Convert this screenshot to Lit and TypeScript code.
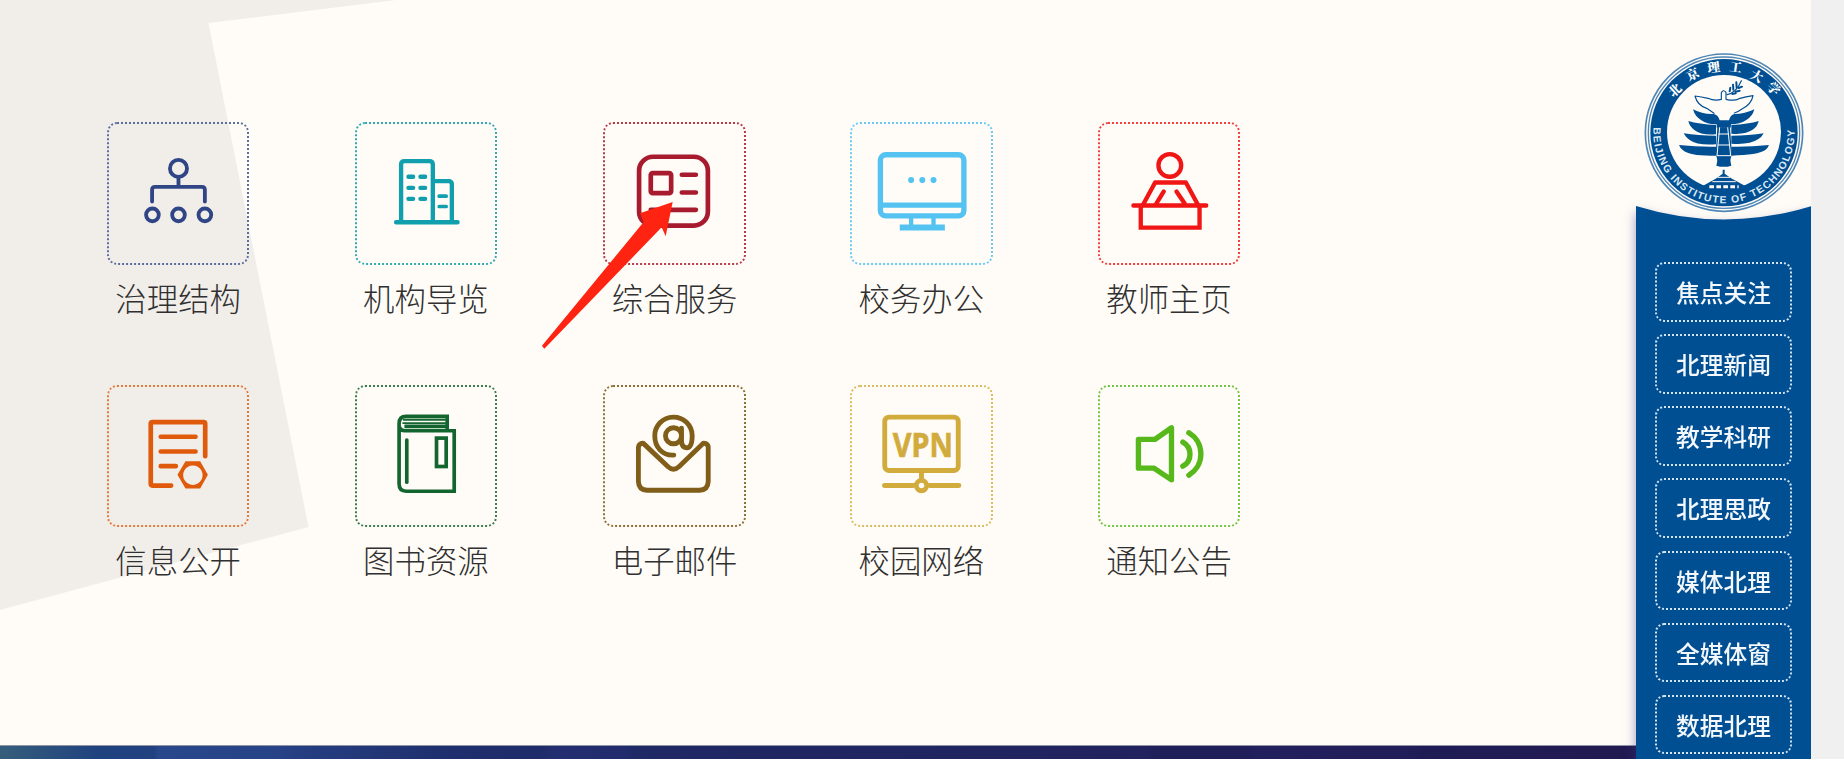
import { LitElement, html, css, svg } from "lit";
import { customElement, property } from "lit/decorators.js";

const CJK = css`"Noto Sans CJK SC", "Noto Sans", sans-serif`;

const icons: Record<string, unknown> = {
  structure: svg`<svg viewBox="57 41 414 414" fill="none" stroke="#2f4585" stroke-width="11.500" stroke-linecap="round">
    <circle cx="265" cy="174" r="25.5"/><path d="M265 200V226M186 273V238q0-9 9-9H335q9 0 9 9V273"/>
    <circle cx="187" cy="313" r="19"/><circle cx="265" cy="313" r="19"/><circle cx="344" cy="313" r="19"/></svg>`,
  building: svg`<svg viewBox="800 41 414 414" fill="none" stroke="#119fae" stroke-width="13" stroke-linecap="round">
    <path d="M917 335H1101M932 335V162q0-10 10-10H1017q10 0 10 10V335M1027 212H1074q10 0 10 10V335"/>
    <path d="M954 199H968M990 199H1004M954 232H968M990 232H1004M954 265H968M990 265H1004"/><path stroke-width="11" d="M1046 257H1067M1046 288H1067"/></svg>`,
  service: svg`<svg viewBox="256 41 414 414" fill="none" stroke="#a81a2e" stroke-width="14" stroke-linecap="round">
    <rect x="358" y="139" width="206" height="206" rx="42"/><rect x="393" y="188" width="61" height="60" rx="6"/>
    <path d="M486 193H528M486 246H528M393 298H528"/></svg>`,
  office: svg`<svg viewBox="996 41 414 414" fill="none" stroke="#55c3f2" stroke-width="16">
    <rect x="1081" y="133" width="250" height="183" rx="16"/><path d="M1081 284H1331"/>
    <path stroke-width="13" d="M1173 320V345M1240 320V345"/><path stroke-width="18" d="M1139 351H1274"/>
    <g fill="#55c3f2" stroke="none"><circle cx="1173" cy="209" r="9"/><circle cx="1206.500" cy="209" r="9"/><circle cx="1240" cy="209" r="9"/></g></svg>`,
  teacher: svg`<svg viewBox="60 41 414 414" fill="none" stroke="#f01616" stroke-width="13" stroke-linecap="round">
    <circle cx="269" cy="165" r="34"/><path stroke-linejoin="round" d="M188 284L225 216H317L354 284"/>
    <path d="M228 280L251 243M314 280L289 243M160 285H378"/><path stroke-linecap="butt" d="M182 288V351H358V288"/></svg>`,
  info: svg`<svg viewBox="57 50 414 414" fill="none" stroke="#e05a0c" stroke-width="14" stroke-linecap="round" stroke-linejoin="round">
    <path d="M345 257V160q0-5-5-5H187q-5 0-5 5V340q0 5 5 5H243M212 199H316M212 243H316M212 287H257"/>
    <path fill="#e05a0c" stroke="none" fill-rule="evenodd" d="M286 272H330L353 313L330 354H286L262 313ZM308 285a29 29 0 1 0 .1 0Z"/></svg>`,
  book: svg`<svg viewBox="800 50 414 414" fill="none" stroke="#13652f" stroke-width="11">
    <path d="M1070 180V138H947q-21 0-21 22V340q0 22 21 22H1091V181H942q-15-2-16-15M942 168H1067"/><path stroke-width="5.500" d="M938 148H1066M936 158H1066"/>
    <path stroke-linecap="round" d="M949 209V335"/><rect x="1038" y="203" width="29" height="85"/></svg>`,
  mail: svg`<svg viewBox="46 50 414 414" fill="none" stroke="#805d18" stroke-width="14.500" stroke-linecap="round" stroke-linejoin="round">
    <path d="M146 333V231Q147 219 160 218L234 288Q251 304 268 288L341 218Q355 219 355 231V333Q354 358 329 359H172Q147 358 146 333Z"/>
    <path d="M252 254C217 256 195 229 195 197A56 56 0 0 1 307 195Q307 231 291 232Q275 231 275 211V173"/><circle cx="251" cy="196" r="24"/></svg>`,
  vpn: svg`<svg viewBox="787 50 414 414" fill="none" stroke="#d2ab3d" stroke-width="14.500" stroke-linecap="round">
    <rect x="885" y="140" width="220" height="160" rx="13"/><path d="M995 303V323M884 345H970M1020 345H1107"/><circle cx="995" cy="345" r="15.500"/>
    <text class="vpn" x="909" y="261" textLength="180" lengthAdjust="spacingAndGlyphs">VPN</text></svg>`,
  notice: svg`<svg viewBox="60 50 414 414" fill="none" stroke="#57b81c" stroke-width="16" stroke-linecap="round" stroke-linejoin="round">
    <path d="M175 207H224L274 172V328L222 293H175Z"/><path d="M308 215A41 41 0 0 1 308 287M326 187A74 74 0 0 1 326 314"/></svg>`,
};

@customElement("service-tile")
class ServiceTile extends LitElement {
  @property() label = "";
  @property() icon = "";
  @property() color = "";
  static styles = css`
    :host { display: flex; flex-direction: column; align-items: center; width: 142.3px; }
    .box { box-sizing: border-box; width: 142.3px; height: 142.3px; border: 2px dotted; border-radius: 10px; }
    .box svg { display: block; width: 100%; height: 100%; }
    .label { margin-top: 9px; height: 47px; font: 300 31.4px/47px ${CJK}; color: #303030; white-space: nowrap; }
    .vpn { font: bold 100px "Noto Sans", "Open Sans", sans-serif; fill: #d2ab3d; stroke: #d2ab3d; stroke-width: 2px; }
  `;
  render() {
    return html`<div class="box" style="border-color:${this.color}">${icons[this.icon]}</div><div class="label">${this.label}</div>`;
  }
}

@customElement("school-emblem")
class SchoolEmblem extends LitElement {
  static styles = css`
    :host { display: block; width: 160px; height: 160px; }
    svg { display: block; }
    .cn { font: 900 38px "Noto Serif CJK SC", "Noto Sans CJK SC", serif; fill: #fff; text-anchor: middle; }
    .en { font: bold 31px "Liberation Sans", sans-serif; fill: #dbe9f5; }
  `;
  render() {
    const glyphs: [string, number, number, number][] = [
      ["北", 151, 151, -42], ["京", 204, 104, -26], ["理", 267, 83, -8],
      ["工", 333, 82, 8], ["大", 396, 109, 28], ["学", 447, 147, 45],
    ];
    return html`<svg width="160" height="160" viewBox="58 39 480 480">
      <circle cx="298" cy="278" r="236" fill="#fffcf8" stroke="#4f86b5" stroke-width="5"/>
      <circle cx="298" cy="278" r="227" fill="none" stroke="#4f86b5" stroke-width="4"/>
      <circle cx="298" cy="278" r="221" fill="#004f93"/>
      <circle cx="298" cy="276" r="171" fill="#fffcf8"/>
      ${glyphs.map(([c, x, y, a]) => svg`<text class="cn" transform="translate(${x} ${y}) rotate(${a})" y="13">${c}</text>`)}
      <path id="ring" fill="none" d="M86.600 262A212 212 0 1 0 509.400 262"/>
      <text class="en"><textPath href="#ring" textLength="690" lengthAdjust="spacing">BEIJING INSTITUTE OF TECHNOLOGY</textPath></text>
      <g fill="#004f93">
        <path d="M205 208Q235 224 267 222Q281 225 285 241H313Q317 225 329 222Q361 222 389 208Q384 229 365 240Q345 253 319 253L318 263H276V253Q248 254 230 241Q211 230 205 208Z"/>
        <path d="M191 243Q222 252 274 255V283Q231 287 209 270Q195 260 191 243ZM402 243Q372 252 320 255V281Q362 285 386 268Q399 258 402 243Z"/>
        <path d="M177 280Q220 287 274 287V313Q218 317 195 300Q182 291 177 280ZM417 280Q374 287 320 287V311Q375 315 400 298Q412 291 417 280Z"/>
        <path d="M163 315Q220 321 274 320V347Q195 349 175 331Q166 324 163 315ZM433 315Q376 321 320 320V347Q400 345 421 331Q430 324 433 315Z"/>
        <path d="M278 262H316L322 345Q314 357 320 377Q297 384 275 377Q281 357 273 345Z"/>
        <path d="M294 389H300V401L322 416L366 440H354V449H241V440H230L273 416L294 401Z"/>
      </g>
      <g fill="none" stroke="#fffcf8" stroke-width="3">
        <path d="M285 262L277 347M309 262L318 347M281 282H313M279 315H316M276 347H320M263 425H333M279 412H316"/>
        <path stroke-width="9" stroke-dasharray="14 7" d="M254 440H342"/>
      </g>
      <g fill="none" stroke="#004f93" stroke-width="3.500" stroke-linecap="round" stroke-linejoin="round">
        <path d="M290 178V158Q296 147 304 157V178Q330 184 343 176Q364 170 385 167Q381 192 352 207Q338 217 329 219M290 178Q270 184 250 175Q230 171 211 168Q218 196 246 205L268 220"/>
        <path d="M307 164Q335 158 350 122"/><path stroke-width="6" d="M315 154L317 143M326 149L325 134M336 143L335 127M323 162L333 160M333 155L345 152M342 144L352 140"/>
      </g>
    </svg>`;
  }
}

@customElement("app-root")
class AppRoot extends LitElement {
  static styles = css`
    :host { display: block; width: 1844px; height: 760px; background: #fff; overflow: hidden; }
    .page { display: grid; grid-template-columns: 1811.3px 1fr; height: 759px; background: #f0f0f0; }
    .main { position: relative; display: grid; grid-template-columns: 1fr 175.6px; overflow: hidden; background: #fffcf7; }
    .wedge { position: absolute; left: 0; top: 0; }
    .content { position: relative; display: flex; flex-direction: column; justify-content: space-between; }
    .tiles { display: grid; grid-template-columns: repeat(5, 142.3px); column-gap: 105.45px; row-gap: 64.5px; padding: 122.4px 0 0 107px; }
    service-tile:nth-child(5n + 3) { margin-left: 1px; }
    .banner { height: 14px; border-top: 1px solid #8f95a5; box-sizing: border-box;
      background: linear-gradient(90deg, transparent 9.400%, #3c58a944 9.700%, #3c58a922 17%, transparent 18%, transparent 33%, #35399033 34%, #35399022 38%, transparent 39%, transparent 70%, #18184c44 71%, #18184c33 76%, transparent 77%, transparent 86%, #18184c44 87%, transparent 94%),
        linear-gradient(90deg, #365e7b, #20427f 6%, #253f82 18%, #1f2e6c 28%, #1f2763 45%, #202560 60%, #221f5c 80%, #201a50); }
    .side { position: relative; display: flex; flex-direction: column; align-items: center; padding-top: 53px; }
    school-emblem { position: relative; z-index: 1; }
    .panel { align-self: stretch; flex: 1; display: flex; flex-direction: column; margin-top: -7px; filter: drop-shadow(0 6px 6px rgba(60, 50, 140, .5)); }
    .curve { display: block; width: 100%; height: 15px; margin-bottom: -1px; }
    .menu { flex: 1; display: flex; flex-direction: column; align-items: center; gap: 12.4px; padding-top: 42.400px; background: #004f93; }
    .item { box-sizing: border-box; flex: none; width: 137px; height: 59.650px; border: 2px dotted #d5e3ef; border-radius: 9px; text-align: center;
      font: 500 23.700px/56px ${CJK}; color: #f4f8fc; white-space: nowrap; }
    .arrow { position: absolute; left: 520px; top: 110px; }
  `;
  private tiles = [
    ["治理结构", "structure", "#5c6da0"], ["机构导览", "building", "#33a9b4"], ["综合服务", "service", "#b53a4c"],
    ["校务办公", "office", "#6ccaf2"], ["教师主页", "teacher", "#f24040"], ["信息公开", "info", "#e67a3c"],
    ["图书资源", "book", "#3a7e50"], ["电子邮件", "mail", "#8e7036"], ["校园网络", "vpn", "#dabb5e"], ["通知公告", "notice", "#74c443"],
  ];
  private menu = ["焦点关注", "北理新闻", "教学科研", "北理思政", "媒体北理", "全媒体窗", "数据北理"];
  render() {
    return html`<div class="page">
      <main class="main">
        <svg class="wedge" width="420" height="620"><polygon points="0,0 396,0 208.500,23 308.500,527 0,610" fill="#f1eeea"/></svg>
        <section class="content">
          <div class="tiles">${this.tiles.map(([l, i, c]) => html`<service-tile .label=${l} .icon=${i} .color=${c}></service-tile>`)}</div>
          <div class="banner"></div>
        </section>
        <aside class="side">
          <school-emblem></school-emblem>
          <div class="panel">
            <svg class="curve" viewBox="0 0 176 15" preserveAspectRatio="none"><path d="M0 0Q88 27 176 0V15H0Z" fill="#004f93"/></svg>
            <nav class="menu">${this.menu.map((m) => html`<div class="item">${m}</div>`)}</nav>
          </div>
        </aside>
        <svg class="arrow" width="170" height="140" viewBox="0 0 510 420" overflow="visible">
          <path d="M458 276L360 310L371 336L66 707L73 716L425 352L437 379Z" fill="#ff2412"/>
        </svg>
      </main>
    </div>`;
  }
}
